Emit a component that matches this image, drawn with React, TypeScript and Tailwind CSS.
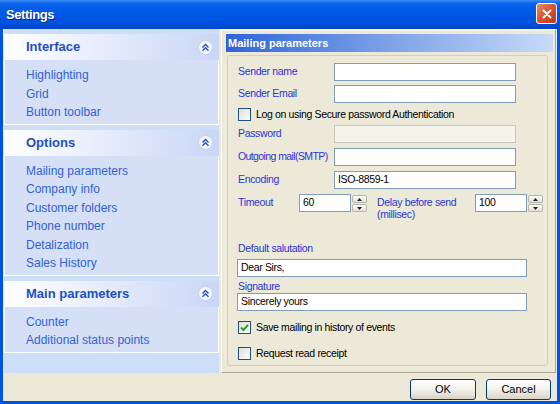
import React from 'react';

const groups = [
  { title: 'Interface', items: ['Highlighting', 'Grid', 'Button toolbar'] },
  {
    title: 'Options',
    items: ['Mailing parameters', 'Company info', 'Customer folders', 'Phone number', 'Detalization', 'Sales History'],
  },
  { title: 'Main parameters', items: ['Counter', 'Additional status points'] },
];

function Chevron() {
  return (
    <div className="w-[15px] h-[15px] rounded-full bg-[#F4F7FE] border border-[#C3CEEC] flex items-center justify-center">
      <svg width="9" height="9" viewBox="0 0 9 9">
        <path d="M1.5 4.5 L4.5 1.5 L7.5 4.5 M1.5 7.8 L4.5 4.8 L7.5 7.8" fill="none" stroke="#2150C8" strokeWidth="1.4" />
      </svg>
    </div>
  );
}

function Field({ value, disabled, className }: { value?: string; disabled?: boolean; className?: string }) {
  return (
    <div
      className={`h-[18px] border px-[3px] flex items-center text-black ${
        disabled ? 'bg-[#F4F3EC] border-[#C9C7BA]' : 'bg-white border-[#7F9DB9]'
      } ${className ?? ''}`}
    >
      {value}
    </div>
  );
}

function SpinBtn({ up }: { up?: boolean }) {
  return (
    <div className="w-[15px] h-[8px] rounded-[2px] border border-[#B8B6AA] bg-gradient-to-b from-white to-[#E3E0D2] flex items-center justify-center">
      <svg width="5" height="3" viewBox="0 0 5 3">
        <path d={up ? 'M0 3 L2.5 0 L5 3 Z' : 'M0 0 L5 0 L2.5 3 Z'} fill="#222" />
      </svg>
    </div>
  );
}

function Spin({ value }: { value: string }) {
  return (
    <div className="flex items-start gap-[1px]">
      <Field value={value} className="w-[52px]" />
      <div className="flex flex-col gap-[1px] pt-[1px]">
        <SpinBtn up />
        <SpinBtn />
      </div>
    </div>
  );
}

function Check({ checked, label, className }: { checked?: boolean; label: string; className?: string }) {
  return (
    <div className={`h-[15px] flex items-center gap-[5px] ${className ?? ''}`}>
      <div className="w-[13px] h-[13px] border border-[#1C5180] bg-gradient-to-br from-[#DCDCD7] to-white flex items-center justify-center">
        {checked && (
          <svg width="9" height="9" viewBox="0 0 9 9">
            <path d="M1 4.5 L3.5 7 L8 1.8" fill="none" stroke="#21A121" strokeWidth="2" />
          </svg>
        )}
      </div>
      <span className="text-black">{label}</span>
    </div>
  );
}

function Row({
  label,
  children,
  className,
  labelClass,
}: {
  label: string;
  children: React.ReactNode;
  className?: string;
  labelClass?: string;
}) {
  return (
    <div className={`flex items-center ${className ?? ''}`}>
      <span className={`w-[96px] text-[#2B35DC] whitespace-nowrap ${labelClass ?? ''}`}>{label}</span>
      {children}
    </div>
  );
}

export default function App() {
  return (
    <div className="w-[560px] h-[404px] bg-[#0054E3] flex flex-col font-['Liberation_Sans',Arial,sans-serif] overflow-hidden">
      {/* Title bar */}
      <div className="h-[29px] shrink-0 flex items-center justify-between pl-[6px] pr-[3px] bg-[linear-gradient(to_bottom,#3D8DF8_0%,#0A62EC_12%,#0058E8_45%,#0052DE_80%,#0042C0_100%)]">
        <span className="text-white font-bold text-[13px] tracking-[-0.4px] [text-shadow:1px_1px_0_#0A2A80]">Settings</span>
        <div className="w-[21px] h-[21px] mb-[2px] rounded-[3px] border border-white bg-gradient-to-br from-[#E98A6A] via-[#D9532E] to-[#C0381A] flex items-center justify-center">
          <svg width="10" height="10" viewBox="0 0 10 10">
            <path d="M1.5 1.5 L8.5 8.5 M8.5 1.5 L1.5 8.5" stroke="white" strokeWidth="2" strokeLinecap="round" />
          </svg>
        </div>
      </div>

      {/* Body */}
      <div className="flex-1 mx-[3px] mb-[3px] bg-[#ECE9D8] flex flex-col">
        <div className="h-[344px] flex">
          {/* Left explorer bar */}
          <div className="ml-[1px] w-[215px] bg-[#CDDEF8] pt-[5px] flex flex-col">
            {groups.map((g) => (
              <div key={g.title} className="mb-[5px]">
                <div className="h-[26px] pl-[22px] pr-[6px] flex items-center justify-between bg-gradient-to-r from-white to-[#C9D6F6]">
                  <span className="text-[13px] font-bold text-[#1E4FC6]">{g.title}</span>
                  <Chevron />
                </div>
                <div className="bg-[#D5DFF6] border-x border-b border-white pl-[21px] pt-[6px] pb-[2px]">
                  {g.items.map((it) => (
                    <div key={it} className="text-[12px] leading-[18.5px] text-[#3262D6]">
                      {it}
                    </div>
                  ))}
                </div>
              </div>
            ))}
          </div>

          {/* Right panel */}
          <div className="ml-[2px] w-[335px] border border-t-white border-l-white border-r-[#ACA899] border-b-[#ACA899] pt-[4px] pl-[4px] pr-[2px] pb-[6px] flex flex-col text-[10.5px] tracking-[-0.35px]">
            <div className="h-[18px] shrink-0 pl-[2px] flex items-center bg-gradient-to-r from-[#2E64D8] via-[#7DA2E6] to-[#C8DAF8]">
              <span className="text-white font-bold text-[11px] tracking-normal">Mailing parameters</span>
            </div>
            <div className="mt-[3px] ml-[1px] mr-[5px] flex-1 border border-[#D0D0BF] rounded-[3px] pl-[10px] flex flex-col">
              <Row label="Sender name" className="mt-[7px]">
                <Field className="w-[182px]" />
              </Row>
              <Row label="Sender Email" className="mt-[4px]">
                <Field className="w-[182px]" />
              </Row>
              <Check label="Log on using Secure password Authentication" className="mt-[4px]" />
              <Row label="Password" className="mt-[3px]">
                <Field disabled className="w-[182px]" />
              </Row>
              <Row label="Outgoing mail(SMTP)" labelClass="tracking-[-0.6px]" className="mt-[5px]">
                <Field className="w-[182px]" />
              </Row>
              <Row label="Encoding" className="mt-[5px]">
                <Field value="ISO-8859-1" className="w-[182px]" />
              </Row>
              <div className="mt-[5px] flex items-start">
                <span className="w-[61px] pt-[2px] leading-[12px] text-[#2B35DC]">Timeout</span>
                <Spin value="60" />
                <span className="ml-[10px] w-[98px] pt-[2px] leading-[12px] text-[#2B35DC]">
                  Delay before send
                  <br />
                  (millisec)
                </span>
                <Spin value="100" />
              </div>
              <span className="mt-[22px] leading-[13px] text-[#2B35DC]">Default salutation</span>
              <Field value="Dear Sirs," className="mt-[4px] -ml-[1px] w-[290px]" />
              <span className="mt-[3px] leading-[13px] text-[#2B35DC]">Signature</span>
              <Field value="Sincerely yours" className="-ml-[1px] w-[290px]" />
              <Check checked label="Save mailing in history of events" className="mt-[9px]" />
              <Check label="Request read receipt" className="mt-[11px]" />
            </div>
          </div>
        </div>

        {/* Buttons */}
        <div className="flex justify-end gap-[10px] pt-[6px] pr-[6px] text-[11px]">
          <button className="w-[66px] h-[21px] rounded-[3px] border border-[#003C74] bg-gradient-to-b from-white via-[#F2F1EB] to-[#D8D3C6] text-black">
            OK
          </button>
          <button className="w-[65px] h-[21px] rounded-[3px] border border-[#003C74] bg-gradient-to-b from-white via-[#F2F1EB] to-[#D8D3C6] text-black">
            Cancel
          </button>
        </div>
      </div>
    </div>
  );
}
